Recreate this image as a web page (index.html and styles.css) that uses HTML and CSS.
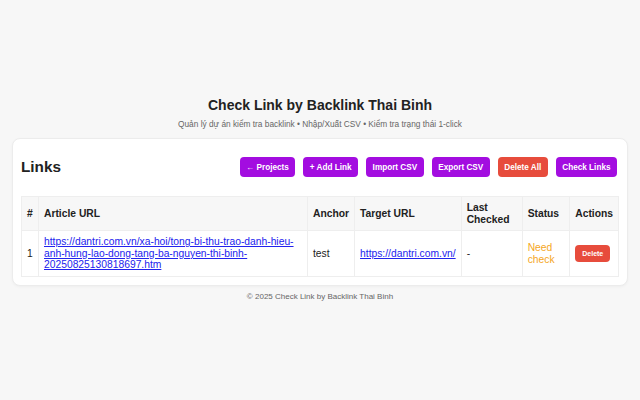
FILE: index.html
```html
<!DOCTYPE html>
<html lang="vi">
<head>
    <meta charset="UTF-8">
    <meta name="viewport" content="width=device-width, initial-scale=1.0">
    <title>Check Link by Backlink Thai Binh</title>
    <link rel="stylesheet" href="styles.css">
</head>
<body>
    <div class="page">
        <header class="top">
            <h1>Check Link by Backlink Thai Binh</h1>
            <p class="sub">Quản lý dự án kiểm tra backlink • Nhập/Xuất CSV • Kiểm tra trạng thái 1-click</p>
        </header>

        <div class="card">
            <div class="card-head">
                <h2>Links</h2>
                <div class="toolbar">
                    <button class="btn">&larr; Projects</button>
                    <button class="btn">+ Add Link</button>
                    <button class="btn">Import CSV</button>
                    <button class="btn">Export CSV</button>
                    <button class="btn btn-red">Delete All</button>
                    <button class="btn">Check Links</button>
                </div>
            </div>

            <table class="links">
                <thead>
                    <tr>
                        <th class="col-num">#</th>
                        <th class="col-article">Article URL</th>
                        <th>Anchor</th>
                        <th>Target URL</th>
                        <th class="col-checked">Last Checked</th>
                        <th>Status</th>
                        <th>Actions</th>
                    </tr>
                </thead>
                <tbody>
                    <tr>
                        <td>1</td>
                        <td><a href="#">https://dantri.com.vn/xa-hoi/tong-bi-thu-trao-danh-hieu-anh-hung-lao-dong-tang-ba-nguyen-thi-binh-20250825130818697.htm</a></td>
                        <td>test</td>
                        <td><a href="#">https://dantri.com.vn/</a></td>
                        <td>-</td>
                        <td class="status-need">Need check</td>
                        <td class="col-actions"><button class="btn-small">Delete</button></td>
                    </tr>
                </tbody>
            </table>
        </div>

        <footer class="foot">© 2025 Check Link by Backlink Thai Binh</footer>
    </div>
</body>
</html>
```

FILE: styles.css
```css
body {
    font-family: "Liberation Sans", Arial, sans-serif;
    background: #f7f7f7;
    color: #222;
    margin: 0;
    padding: 0 12px;
    min-height: 100vh;
    display: flex;
    flex-direction: column;
    justify-content: center;
}
.page {
    display: flex;
    flex-direction: column;
    margin-top: -2px;
}
.top {
    text-align: center;
    margin-bottom: 9px;
}
h1 {
    font-size: 14px;
    margin: 0 0 6px;
    color: #222;
}
.sub {
    font-size: 8.3px;
    color: #666;
    margin: 0;
}
.card {
    background: #fff;
    border: 1px solid #ececec;
    border-radius: 8px;
    padding: 8px;
    box-shadow: 0px 1px 3px rgba(0, 0, 0, 0.04);
}
.card-head {
    display: flex;
    justify-content: space-between;
    align-items: center;
    padding: 10px 2px 19px 0;
}
h2 {
    font-size: 15.3px;
    margin: 0;
    color: #222;
}
.toolbar {
    display: flex;
    gap: 8px;
}
.btn {
    font-family: inherit;
    font-size: 8.2px;
    font-weight: 600;
    color: #fff;
    background: #a30de0;
    border: none;
    border-radius: 4px;
    padding: 0 6.5px;
    height: 20px;
    cursor: pointer;
}
.btn-red {
    background: #e74c3c;
}
.links {
    width: 100%;
    border-collapse: collapse;
    font-size: 10.3px;
    line-height: 1.12;
}
.links th,
.links td {
    border: 1px solid #eee;
    padding: 4px 5px;
    text-align: left;
}
.links th {
    background: #f7f7f7;
    font-weight: bold;
    height: 25px;
}
.links td {
    height: 37px;
}
.links a {
    color: #2222ee;
}
.col-num { width: 6px; }
.col-article { width: 258px; }
.col-checked { width: 50px; }
.status-need {
    color: #f5a623;
}
.col-actions {
    text-align: center;
}
.btn-small {
    font-family: inherit;
    font-size: 7px;
    font-weight: bold;
    color: #fff;
    background: #e74c3c;
    border: none;
    border-radius: 4px;
    height: 17px;
    padding: 0 7px;
}
.foot {
    text-align: center;
    font-size: 8px;
    color: #666;
    margin-top: 6px;
}
```
